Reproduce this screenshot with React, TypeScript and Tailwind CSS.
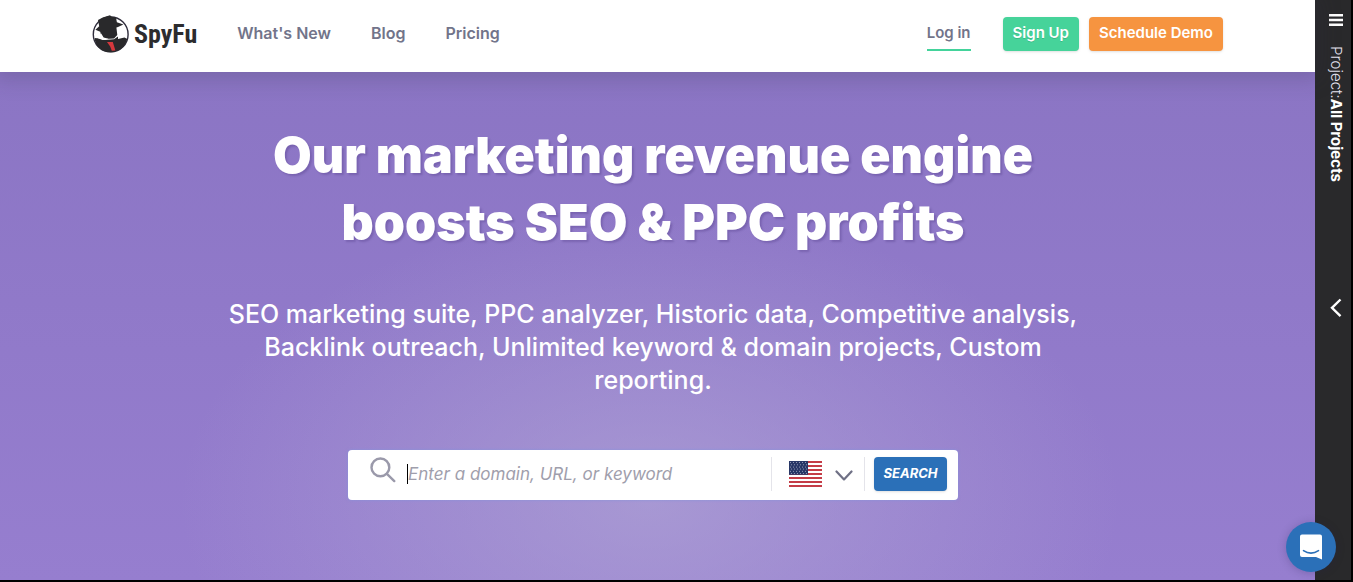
import React from "react";

const STARS = [0, 1, 2, 3, 4, 5];
const STRIPES = [0, 2, 4, 6, 8, 10, 12];

function LogoMark() {
  return (
    <svg viewBox="0 0 38 40" className="h-10 w-[38px] shrink-0" aria-hidden="true">
      <circle cx="18.7" cy="20.4" r="17.4" fill="#fff" stroke="#2f2d3c" strokeWidth="1.4" />
      <path
        d="M6 6 L10.7 3.4 L18 1.3 L19.7 2.7 L24 3.4 L24.9 8.2 L31.4 10.4 L26 13 L24.4 13.4 L25.3 21 L22 24.6 L12.5 25 L9.4 22 L8.2 17.8 L3.4 15.8 L7.2 12.2 Z"
        fill="#29292b"
      />
      <path
        d="M2.6 24 L8 24.4 L12 26 L22 25.2 L26 22.6 L26 25 L32.5 23.6 L35.4 25 Q32 36 22 38 Q12 39.5 6.5 33.5 Q3.2 30 2.6 24 Z"
        fill="#29292b"
      />
      <path d="M9.2 19.4 L11.6 23.4 L16.5 24.8 L13 25.9 L10.5 25.9 L6 24.2 Z" fill="#fff" />
      <path d="M15 28 L20.8 28 L23.4 36.4 L19.8 36.8 L18.2 32.6 Z" fill="#d5383d" />
    </svg>
  );
}

function Flag() {
  return (
    <svg viewBox="0 0 33 26" className="h-[26px] w-[33px]" aria-hidden="true">
      <path fill="#fff" d="M0 0h33v26H0z" />
      {STRIPES.map((n) => (
        <rect key={n} y={n * 2} width="33" height="2" fill="#c43c46" />
      ))}
      <path fill="#283767" d="M0 0h19v13.8H0z" />
      {STARS.map((r) =>
        STARS.map((c) => (
          <circle key={`${r}-${c}`} cx={1.5 + c * 3 + (r % 2) * 0.9} cy={1.5 + r * 2.2} r="0.5" fill="#b4bace" />
        )),
      )}
    </svg>
  );
}

function Header() {
  return (
    <header className="relative z-10 flex h-18 items-center bg-white px-[92px] pb-1 text-[#72748a] shadow-[0_2px_20px_6px_rgba(50,45,70,0.2)]">
      <a href="#home" className="flex items-center gap-1">
        <LogoMark />
        <span className="font-['Roboto_Condensed','Liberation_Sans_Narrow','Roboto',sans-serif] text-[26px] leading-8 font-bold text-[#2c2c2e]">
          SpyFu
        </span>
      </a>
      <nav className="ml-10 flex gap-10 pb-0.5 text-base font-semibold">
        <a href="#new">What's New</a>
        <a href="#blog">Blog</a>
        <a href="#pricing">Pricing</a>
      </nav>
      <div className="ml-auto flex items-center text-[15px] font-semibold">
        <a href="#login" className="mr-8 h-[34px] border-b-2 border-[#43d39b] leading-8">
          Log in
        </a>
        <button type="button" className="mr-2.5 h-[34px] rounded bg-[#46d39a] px-2.5 pb-0.5 text-white shadow-sm text-shadow-2xs">
          Sign Up
        </button>
        <button type="button" className="h-[34px] rounded bg-[#f69440] px-2.5 pb-0.5 text-white shadow-sm">
          Schedule Demo
        </button>
      </div>
    </header>
  );
}

function SearchForm() {
  return (
    <form
      className="mt-[53px] flex h-[50px] w-full max-w-[610px] items-center rounded bg-white pr-[11px] pb-0.5 pl-[22px] shadow-[0_0_3px_rgba(130,150,225,0.8)]"
      onSubmit={(e) => e.preventDefault()}
    >
      <svg viewBox="0 0 26 26" className="mb-2 size-[26px] shrink-0" fill="none" stroke="#9a99aa" strokeWidth="2.4" strokeLinecap="round" aria-hidden="true">
        <circle cx="10.4" cy="10.4" r="8.9" />
        <path d="M16.9 16.9l7.4 7.2" />
      </svg>
      <span className="ml-[11px] h-5 w-px shrink-0 bg-black" />
      <input
        type="text"
        aria-label="Domain, URL, or keyword"
        placeholder="Enter a domain, URL, or keyword"
        className="h-full min-w-0 flex-1 bg-transparent text-[17px] italic text-gray-700 outline-none placeholder:text-[#9f9eac]"
      />
      <label className="relative flex h-[34px] items-center gap-[13px] border-x border-[#e4e4ea] pr-[11px] pl-[17px]">
        <Flag />
        <svg viewBox="0 0 18 12" className="mt-1 h-3 w-[18px]" fill="none" stroke="#6f7085" strokeWidth="2.2" strokeLinecap="round" strokeLinejoin="round" aria-hidden="true">
          <path d="M1.5 1.5L9 9.4l7.5-7.9" />
        </svg>
        <select aria-label="Country" className="absolute inset-0 cursor-pointer opacity-0">
          <option>US</option>
        </select>
      </label>
      <button
        type="submit"
        className="ml-[9px] h-[34px] w-[73px] rounded bg-[#2b70b8] text-[13px] font-bold italic text-white shadow-sm"
      >
        SEARCH
      </button>
    </form>
  );
}

function Hero() {
  return (
    <main className="flex flex-1 flex-col items-center bg-[radial-gradient(ellipse_470px_290px_at_650px_430px,rgba(180,170,215,0.6),transparent),linear-gradient(#8b75c4,#967ecf)] pt-[50px] pr-[9px] pb-10 text-center text-white">
      <h1 className="max-w-[800px] text-[50px] leading-[67px] font-black text-shadow-[2px_2px_2px_rgba(60,40,110,0.25)]">
        Our marketing revenue engine boosts SEO &amp; PPC profits
      </h1>
      <p className="mt-[42px] max-w-[880px] text-[25px] leading-[33px] font-medium">
        SEO marketing suite, PPC analyzer, Historic data, Competitive analysis, Backlink outreach, Unlimited keyword
        &amp; domain projects, Custom reporting.
      </p>
      <SearchForm />
    </main>
  );
}

function ProjectRail() {
  return (
    <aside className="relative flex w-[38px] shrink-0 flex-col items-center border-r-2 border-black bg-[#29292b] text-white">
      <button type="button" aria-label="Menu" className="mt-3.5 ml-[5px]">
        <svg viewBox="0 0 14 12" className="h-3 w-3.5" fill="#fff" aria-hidden="true">
          <path d="M0 0h14v2.6H0zM0 4.7h14v2.6H0zM0 9.4h14v2.6H0z" />
        </svg>
      </button>
      <div className="mt-5 ml-[5px] text-[15px] leading-4 [writing-mode:vertical-rl]">
        <span className="font-light text-[#e6e4f0]">Project:</span>
        <strong className="font-bold">All Projects</strong>
      </div>
      <button type="button" aria-label="Expand projects" className="absolute top-[298px] right-[9px]">
        <svg viewBox="0 0 12 20" className="h-5 w-3" fill="none" stroke="#fff" strokeWidth="2.4" aria-hidden="true">
          <path d="M10.5 1.5L2 9.8l8.5 8.3" />
        </svg>
      </button>
    </aside>
  );
}

export default function App() {
  return (
    <div className="relative flex min-h-screen border-b-2 border-black font-['Inter',sans-serif]">
      <div className="flex min-w-0 flex-1 flex-col">
        <Header />
        <Hero />
      </div>
      <ProjectRail />
      <button
        type="button"
        aria-label="Open chat"
        className="absolute right-[17px] bottom-2 z-20 flex size-[50px] items-center justify-center rounded-full bg-[#2b70b8] shadow-[0_1px_8px_rgba(40,30,80,0.25)]"
      >
        <svg viewBox="0 0 24 26" className="h-[26px] w-6" aria-hidden="true">
          <path d="M3 .5h18a2 2 0 0 1 2 2V25.5L17 23H3a2 2 0 0 1-2-2V2.5a2 2 0 0 1 2-2z" fill="#fff" />
          <path d="M4.5 16.6q7.5 5 15 0" fill="none" stroke="#2b70b8" strokeWidth="1.6" strokeLinecap="round" />
        </svg>
      </button>
    </div>
  );
}
